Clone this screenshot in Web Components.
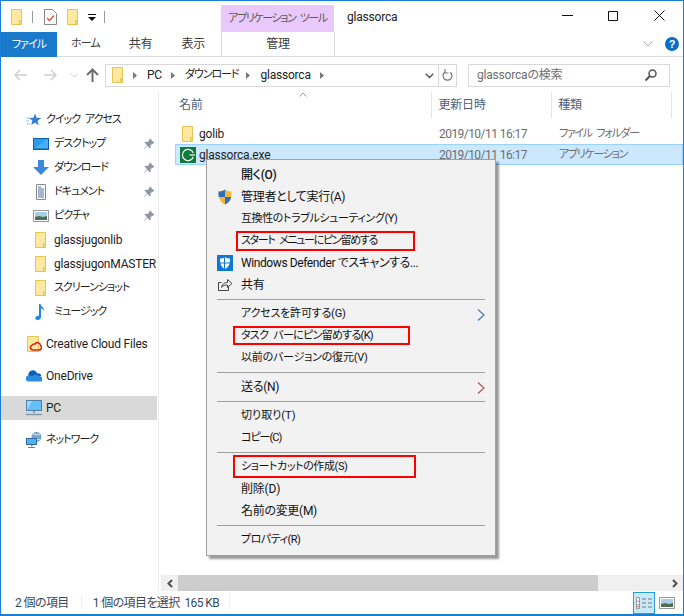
<!DOCTYPE html>
<html lang="ja">
<head>
<meta charset="utf-8">
<title>glassorca</title>
<style>
  html, body { margin: 0; padding: 0; height: 100%; background: #fff; }
  body {
    font: 12px/16px Roboto, "Noto Sans CJK JP", sans-serif;
    font-feature-settings: "palt";
    letter-spacing: -.2px;
    color: #1e1e1e;
  }
  nav-item.kana { font-size: 11px; letter-spacing: -1px; word-spacing: 3px; }
  menu-item.kana { font-size: 11px; letter-spacing: var(--ls, -.4px); word-spacing: 3px; }
  menu-item.tight { letter-spacing: -.3px; }
</style>
</head>
<body>

<explorer-window>
  <title-bar slot="top"></title-bar>
  <ribbon-tabs slot="top"></ribbon-tabs>
  <address-row slot="top"></address-row>

  <nav-pane slot="nav">
    <nav-item class="kana" level="top" icon="star">クイック アクセス</nav-item>
    <nav-item class="kana" icon="desktop" pinned>デスクトップ</nav-item>
    <nav-item class="kana" icon="download" pinned>ダウンロード</nav-item>
    <nav-item class="kana" icon="document" pinned>ドキュメント</nav-item>
    <nav-item class="kana" icon="picture" pinned>ピクチャ</nav-item>
    <nav-item icon="folder">glassjugonlib</nav-item>
    <nav-item icon="folder">glassjugonMASTER</nav-item>
    <nav-item class="kana" icon="folder">スクリーンショット</nav-item>
    <nav-item class="kana" icon="music">ミュージック</nav-item>
    <nav-item level="top" icon="creative" style="--gap-top:8px">Creative Cloud Files</nav-item>
    <nav-item level="top" icon="onedrive" style="--gap-top:8px">OneDrive</nav-item>
    <nav-item level="top" icon="pc" selected style="--gap-top:8px">PC</nav-item>
    <nav-item class="kana" level="top" icon="network" style="--gap-top:8px">ネットワーク</nav-item>
  </nav-pane>

  <file-list slot="files">
    <file-row icon="folder" date="2019/10/11 16:17" kind="ファイル フォルダー">golib</file-row>
    <file-row icon="app" date="2019/10/11 16:17" kind="アプリケーション" selected>glassorca.exe</file-row>
  </file-list>

  <status-bar slot="bottom"></status-bar>

  <context-menu slot="overlay">
    <menu-item class="tight" strong>開く(O)</menu-item>
    <menu-item class="tight" icon="uac">管理者として実行(A)</menu-item>
    <menu-item class="kana">互換性のトラブルシューティング(Y)</menu-item>
    <menu-item class="kana" style="--ls:-1.300px">スタート メニューにピン留めする</menu-item>
    <menu-item class="kana" style="font-size:12px;--ls:-.400px;word-spacing:0" icon="defender">Windows Defender でスキャンする...</menu-item>
    <menu-item icon="share">共有</menu-item>
    <menu-sep></menu-sep>
    <menu-item class="kana" style="--ls:-.2px" arrow="#4a7ab8">アクセスを許可する(G)</menu-item>
    <menu-item class="kana" style="--ls:-.7px">タスク バーにピン留めする(K)</menu-item>
    <menu-item class="kana" style="--ls:-.2px">以前のバージョンの復元(V)</menu-item>
    <menu-sep></menu-sep>
    <menu-item class="tight" arrow="#b0555a">送る(N)</menu-item>
    <menu-sep></menu-sep>
    <menu-item class="kana" style="--ls:0px">切り取り(T)</menu-item>
    <menu-item class="kana" style="--ls:-1px">コピー(C)</menu-item>
    <menu-sep></menu-sep>
    <menu-item class="kana">ショートカットの作成(S)</menu-item>
    <menu-item>削除(D)</menu-item>
    <menu-item class="tight">名前の変更(M)</menu-item>
    <menu-sep></menu-sep>
    <menu-item class="kana" style="--ls:-.5px">プロパティ(R)</menu-item>
  </context-menu>

  <red-mark slot="overlay" style="left:236px;top:231px;width:175px;height:16px"></red-mark>
  <red-mark slot="overlay" style="left:233px;top:326px;width:173px;height:15px"></red-mark>
  <red-mark slot="overlay" style="left:233px;top:455px;width:179px;height:19px"></red-mark>
</explorer-window>

<script>
// Icon drawings, all on a 16x16 grid unless noted.
const ICONS = {
  folder: `<svg viewBox="0 0 16 18" width="16" height="18"><path d="M2.500 1.500h10v15h-10z" fill="#ffe9a0" stroke="#e6c455"/><path d="M10.500 16.500v-4h2v4z" fill="#f7d774" stroke="#e6c455"/></svg>`,
  star: `<svg viewBox="0 0 16 16" width="16" height="16"><path d="M9 1.500l1.600 4.300 4.600.2-3.600 2.900 1.200 4.500L9 10.400l-3.800 2.500 1.200-4.500L2.800 6l4.600-.2z" fill="#2f7fd6"/><path d="M0 6h4M0 9h3M1 12h3" stroke="#8ec1ee" stroke-width="1"/></svg>`,
  desktop: `<svg viewBox="0 0 16 16" width="16" height="16"><rect x="0.500" y="2.500" width="15" height="11" fill="#2e9bf0" stroke="#0f5fb0"/><path d="M1 13l13-10h1v10z" fill="#46b1f7"/><rect x="0" y="12.500" width="16" height="1.500" fill="#0f5fb0"/></svg>`,
  download: `<svg viewBox="0 0 16 16" width="16" height="16"><path d="M5 0h6v7h5l-8 8-8-8h5z" fill="#3b87d9"/></svg>`,
  document: `<svg viewBox="0 0 16 16" width="16" height="16"><path d="M3.500.5h9v15h-9z" fill="#fff" stroke="#8a8a8a"/><path d="M5 3h3M5 5h6M5 7h6M5 9h6M5 11h6M5 13h6" stroke="#3f74a8"/></svg>`,
  picture: `<svg viewBox="0 0 16 16" width="16" height="16"><rect x="0.500" y="2.500" width="15" height="11" fill="#fff" stroke="#9a9a9a"/><rect x="2" y="4" width="12" height="8" fill="#a9cfe6"/><path d="M2 9l4-1 4 1 4-1v4H2z" fill="#4d6f50"/></svg>`,
  music: `<svg viewBox="0 0 16 16" width="16" height="16"><path d="M6 0h1.500c.3 2.500 4 3.500 4 7-.8-1.500-2-2.300-3.500-2.600V13c0 1.800-1.600 3-3.500 3S2 15 2.500 13.500 5 11.300 6 12z" fill="#1e88e5"/></svg>`,
  creative: `<svg viewBox="0 0 16 18" width="16" height="18"><path d="M1.500 1.500h11v15h-11z" fill="#ffe9a0" stroke="#e6c455"/><path d="M9 9a3 3 0 0 1 5.500 1.500A2.500 2.500 0 0 1 13 15H7a2.500 2.500 0 0 1-1-4.800A3 3 0 0 1 9 9z" fill="none" stroke="#d8271c" stroke-width="1.600"/></svg>`,
  onedrive: `<svg viewBox="0 0 16 12" width="16" height="12"><path d="M2.500 6a4.500 4.500 0 0 1 8.700-2.500A3.500 3.500 0 0 1 15.500 6L7 9z" fill="#0f5fb5"/><path d="M3 11.500A3 3 0 0 1 2.500 5.500l4 .5 3-1.500 6 2.500a2.300 2.300 0 0 1-1 4.500z" fill="#2a8ce0"/></svg>`,
  pc: `<svg viewBox="0 0 16 16" width="16" height="16"><rect x="0.500" y="0.500" width="15" height="10" fill="#64c0f8" stroke="#4f7ea5"/><path d="M1 10V1h5z" fill="#9adafc"/><path d="M7 11h2v2H7z" fill="#8aa4b8"/><path d="M0 14.500h16" stroke="#7d99ae" stroke-width="1.400"/></svg>`,
  network: `<svg viewBox="0 0 16 16" width="16" height="16"><circle cx="10.500" cy="5" r="5" fill="#7aa6c8"/><path d="M7 2c2 1 6 1 7 0M8 8c2-1 4-1 6 0" stroke="#dbe9f3" fill="none"/><rect x="0.500" y="6.500" width="10" height="6" fill="#4fb2f2" stroke="#2f6c99"/><path d="M5 13h1.500v1.500H5zM2 15h7v1H2z" fill="#5c87a6"/></svg>`,
  app: `<svg viewBox="0 0 16 16" width="16" height="16"><rect width="16" height="16" fill="#0f7a3c"/><path d="M13.300 6A5.600 5.600 0 1 0 13.300 10" fill="none" stroke="#fff" stroke-width="1.100"/><path d="M9.500 8H15" stroke="#fff" stroke-width="1.200"/></svg>`,
  uac: `<svg viewBox="0 0 16 16" width="16" height="16"><path d="M8 .5c2 1.500 4 2 6.500 2 0 6-1 10.500-6.500 13C2.500 13 1.500 8.500 1.500 2.500 4 2.500 6 2 8 .5z" fill="#f2b632"/><path d="M8 .5v7.500H1.700C1.500 6.500 1.500 4.500 1.500 2.500 4 2.500 6 2 8 .5z" fill="#2d6fc4"/><path d="M8 8h6.200c-.6 3.300-2.300 5.800-6.200 7.500z" fill="#2d6fc4"/></svg>`,
  defender: `<svg viewBox="0 0 16 16" width="16" height="16"><rect width="16" height="16" fill="#0f78d4"/><path d="M8 2c1.500 1 3 1.500 5 1.500 0 5-.8 8.500-5 10.500-4.200-2-5-5.500-5-10.500C5 3.500 6.500 3 8 2z" fill="#fff"/><path d="M7.500 2v12M3 8h10" stroke="#0f78d4"/></svg>`,
  share: `<svg viewBox="0 0 16 16" width="16" height="16" fill="none" stroke="#444"><path d="M11.500 9.500v4h-10v-8h3"/><path d="M4.500 10.500c.5-3.500 3-5 6-5v-3l4.500 4-4.500 4V8c-2.500 0-4.500.5-6 2.500z"/></svg>`,
  pin: `<svg viewBox="0 0 12 12" width="12" height="12"><path d="M7 .5l4.500 4.500-1.300.8-.7-.3-2 2 .2 2-1 1-2.300-2.700L1 11l-.2-.2L4 7 1.500 4.700l1-1 2 .2 2-2-.3-.7z" fill="#8d98a3"/></svg>`
}

/**
 * Draws one named icon from the ICONS table.
 */
customElements.define('app-icon', class extends HTMLElement {
  constructor () {
    super()
    this.attachShadow({ mode: 'open' }).innerHTML = `
      <style>:host { display: inline-flex; align-items: center; justify-content: center; flex: none; } svg { display: block; }</style>
      ${ICONS[this.getAttribute('name')] || ''}`
  }
})

// Outer window frame: blue border, stacked bars, nav pane beside the file list.
customElements.define('explorer-window', class extends HTMLElement {
  constructor () {
    super()
    this.attachShadow({ mode: 'open' }).innerHTML = `
      <style>
        :host {
          display: flex; flex-direction: column; position: relative;
          width: 684px; height: 616px; box-sizing: border-box;
          border: 1px solid #1a7fd4; border-bottom-width: 2px;
          background: #fff; overflow: hidden;
        }
        #main { flex: 1; display: flex; min-height: 0; }
        #overlay { position: absolute; left: -1px; top: -1px; width: 0; height: 0; }
      </style>
      <slot name="top"></slot>
      <div id="main">
        <slot name="nav"></slot>
        <slot name="files"></slot>
      </div>
      <slot name="bottom"></slot>
      <div id="overlay"><slot name="overlay"></slot></div>`
  }
})

customElements.define('title-bar', class extends HTMLElement {
  constructor () {
    super()
    this.attachShadow({ mode: 'open' }).innerHTML = `
      <style>
        :host { display: flex; height: 31px; align-items: center; position: relative; }
        #qat { display: flex; align-items: center; margin: 0 0 0 8px; width: 212px; }
        .sep { width: 1px; height: 12px; background: #9a9a9a; }
        #tool {
          align-self: flex-end; width: 113px; height: 27px; background: #e9c9fb;
          display: flex; align-items: center; justify-content: center; color: #5a5a5a; white-space: nowrap;
          font-size: 11px; letter-spacing: -1.400px; word-spacing: 3px;
        }
        #name { margin-left: 13px; flex: 1; color: #222; }
        #buttons { display: flex; margin-right: 1px; }
        .btn { width: 46px; height: 30px; display: flex; align-items: center; justify-content: center; margin-top: -2px; }
      </style>
      <div id="qat">
        <app-icon name="folder"></app-icon>
        <span class="sep" style="margin-left:7px"></span>
        <svg style="margin-left:11px" width="13" height="16" viewBox="0 0 13 16"><path d="M.5.500h8l4 4v11H.5z" fill="#fff" stroke="#888"/><path d="M3 9l2.500 2.500L10 6.500" fill="none" stroke="#e2512a" stroke-width="1.400"/></svg>
        <app-icon name="folder" style="margin-left:8px"></app-icon>
        <svg style="margin-left:7px;margin-top:2px" width="8" height="8" viewBox="0 0 8 8"><path d="M0 0h8v1H0zM0 3h8L4 7z" fill="#111"/></svg>
        <span class="sep" style="margin-left:8px"></span>
      </div>
      <div id="tool">アプリケーション ツール</div>
      <div id="name">glassorca</div>
      <div id="buttons">
        <div class="btn"><svg width="11" height="11"><path d="M0 5.500h11" stroke="#111"/></svg></div>
        <div class="btn"><svg width="10" height="10"><path d="M.5.500h9v9h-9z" fill="none" stroke="#111"/></svg></div>
        <div class="btn"><svg width="11" height="11"><path d="M.5.500l10 10M10.500.500l-10 10" stroke="#111" fill="none"/></svg></div>
      </div>`
  }
})

customElements.define('ribbon-tabs', class extends HTMLElement {
  constructor () {
    super()
    this.attachShadow({ mode: 'open' }).innerHTML = `
      <style>
        :host { display: flex; height: 25px; align-items: stretch; border-bottom: 1px solid #dadbdc; box-sizing: border-box; color: #3c3c3c; }
        .tab { display: flex; align-items: center; }
        .k { font-size: 11px; letter-spacing: -.9px; }
        #file { width: 56px; background: #1979ca; color: #fff; justify-content: center; margin-bottom: -1px; }
        #manage { position: absolute; left: 220px; width: 112px; height: 24px; justify-content: center; border: solid #dadbdc; border-width: 0 1px; }
        #right { margin-left: auto; display: flex; align-items: center; }
        #help {
          width: 14px; height: 14px; border-radius: 50%; background: #0b6fc4; color: #fff; margin: 0 4px 0 12px;
          font: 700 11px/14px "Liberation Sans", sans-serif; text-align: center;
        }
      </style>
      <div class="tab k" id="file">ファイル</div>
      <div class="tab k" style="margin-left:14px">ホーム</div>
      <div class="tab" style="margin-left:29px">共有</div>
      <div class="tab" style="margin-left:29px">表示</div>
      <div class="tab" id="manage">管理</div>
      <div id="right">
        <svg width="10" height="6" viewBox="0 0 10 6"><path d="M.5.500L5 5 9.500.500" fill="none" stroke="#a8a8a8"/></svg>
        <div id="help">?</div>
      </div>`
  }
})

customElements.define('address-row', class extends HTMLElement {
  constructor () {
    super()
    this.attachShadow({ mode: 'open' }).innerHTML = `
      <style>
        :host { display: flex; height: 34px; align-items: center; box-sizing: border-box; padding: 2px 0 0 13px; color: #222; }
        svg { display: block; flex: none; }
        #path {
          margin-left: 6px; width: 334px; height: 23px; box-sizing: border-box; border: 1px solid #d9d9d9;
          display: flex; align-items: center; padding-left: 4px; position: relative;
        }
        #refresh {
          width: 18px; height: 23px; box-sizing: border-box; border: solid #d9d9d9; border-width: 1px 1px 1px 0;
          display: flex; align-items: center; justify-content: center;
        }
        #search {
          margin-left: 11px; width: 202px; height: 23px; box-sizing: border-box; border: 1px solid #d9d9d9;
          display: flex; align-items: center; padding: 0 12px 0 8px; color: #6d6d6d; justify-content: space-between;
        }
        .crumb { margin-left: 9px; }
        .chev { margin-left: 9px; }
        #drop { position: absolute; right: 4px; top: 8px; }
      </style>
      <svg width="13" height="12" viewBox="0 0 13 12"><path d="M6 1L1 6l5 5M1 6h12" fill="none" stroke="#cfcfcf" stroke-width="1.500"/></svg>
      <svg style="margin-left:17px" width="13" height="12" viewBox="0 0 13 12"><path d="M7 1l5 5-5 5M12 6H0" fill="none" stroke="#cfcfcf" stroke-width="1.500"/></svg>
      <svg style="margin-left:13px" width="8" height="5" viewBox="0 0 8 5"><path d="M.5.500L4 4 7.500.500" fill="none" stroke="#d4d4d4"/></svg>
      <svg style="margin-left:8px" width="13" height="14" viewBox="0 0 13 14"><path d="M1 7l5.500-5.500L12 7M6.500 2v12" fill="none" stroke="#6d6d6d" stroke-width="2"/></svg>
      <div id="path">
        <app-icon name="folder"></app-icon>
        <svg class="chev" style="margin-left:7px" width="5" height="7"><path d="M0 0l4 3.500L0 7z" fill="#777"/></svg>
        <span class="crumb">PC</span>
        <svg class="chev" width="5" height="7"><path d="M0 0l4 3.500L0 7z" fill="#777"/></svg>
        <span class="crumb" style="font-size:11px;letter-spacing:-1.100px">ダウンロード</span>
        <svg class="chev" style="margin-left:8px" width="5" height="7"><path d="M0 0l4 3.500L0 7z" fill="#777"/></svg>
        <span class="crumb">glassorca</span>
        <svg class="chev" width="5" height="7"><path d="M0 0l4 3.500L0 7z" fill="#777"/></svg>
        <svg id="drop" width="9" height="6" viewBox="0 0 9 6"><path d="M.7.700L4.500 4.500 8.300.700" fill="none" stroke="#555" stroke-width="1.400"/></svg>
      </div>
      <div id="refresh">
        <svg width="11" height="12" viewBox="0 0 11 12"><path d="M8.300 3.200A4.500 4.500 0 1 1 2.700 3.200" fill="none" stroke="#777" stroke-width="1.200"/><path d="M6 0v4h3.500" fill="none" stroke="#777" stroke-width="1.200" transform="translate(-3 0)"/></svg>
      </div>
      <div id="search">
        <span>glassorcaの検索</span>
        <svg width="12" height="12" viewBox="0 0 12 12"><circle cx="7.500" cy="4.500" r="3.500" fill="none" stroke="#555" stroke-width="1.500"/><path d="M5 7l-4.500 4.500" stroke="#555" stroke-width="2"/></svg>
      </div>`
  }
})

customElements.define('nav-pane', class extends HTMLElement {
  constructor () {
    super()
    this.attachShadow({ mode: 'open' }).innerHTML = `
      <style>
        :host { display: block; width: 158px; flex: none; box-sizing: border-box; padding-top: 17px; border-right: 2px solid transparent; position: relative; }
        #line { position: absolute; right: -2px; top: 0; bottom: 0; width: 1px; background: #efefef; }
        #inner { width: 156px; }
      </style>
      <div id="inner"><slot></slot></div><div id="line"></div>`
  }
})

customElements.define('nav-item', class extends HTMLElement {
  constructor () {
    super()
    const top = this.getAttribute('level') === 'top'
    const pin = this.hasAttribute('pinned') ? '<app-icon id="pin" name="pin"></app-icon>' : ''
    this.attachShadow({ mode: 'open' }).innerHTML = `
      <style>
        :host { display: flex; align-items: center; height: 24px; margin-top: var(--gap-top, 0); position: relative; white-space: nowrap; }
        :host([selected]) { background: #d9d9d9; }
        app-icon { margin-left: ${top ? 25 : 32}px; width: 16px; }
        #text { margin-left: ${top ? 4 : 5}px; }
        #pin { position: absolute; left: 142px; margin: 0; width: 12px; }
      </style>
      <app-icon name="${this.getAttribute('icon')}"></app-icon>
      <span id="text"><slot></slot></span>${pin}`
  }
})

customElements.define('file-list', class extends HTMLElement {
  constructor () {
    super()
    this.attachShadow({ mode: 'open' }).innerHTML = `
      <style>
        :host { flex: 1; min-width: 0; display: flex; flex-direction: column; position: relative; }
        #head { display: flex; height: 26px; margin: 1px 0 5px 0; padding-left: 20px; color: #4c607a; position: relative; align-items: center; }
        .col { height: 100%; display: flex; align-items: center; box-sizing: border-box; }
        .col + .col { border-left: 1px solid #e5e5e5; padding-left: 6px; }
        #sort { position: absolute; left: 140px; top: 0; }
        #rows { flex: 1; padding-left: 16px; }
        #bar { height: 16px; display: flex; background: #f0f0f0; margin-left: 2px; }
        .end { width: 17px; display: flex; align-items: center; justify-content: center; flex: none; }
        #thumb { width: 420px; background: #cdcdcd; }
        #gap { flex: 1; }
      </style>
      <div id="head">
        <div class="col" style="width:253px">名前</div>
        <div class="col" style="width:120px">更新日時</div>
        <div class="col" style="width:120px">種類</div>
        <div class="col" style="width:12px"></div>
        <svg id="sort" width="8" height="5" viewBox="0 0 8 5"><path d="M.5 4.500L4 1l3.500 3.500" fill="none" stroke="#9a9a9a"/></svg>
      </div>
      <div id="rows"><slot></slot></div>
      <div id="bar">
        <div class="end"><svg width="6" height="9" viewBox="0 0 6 9"><path d="M5 1L1.500 4.500 5 8" fill="none" stroke="#505050" stroke-width="2"/></svg></div>
        <div id="thumb"></div>
        <div id="gap"></div>
        <div class="end"><svg width="6" height="9" viewBox="0 0 6 9"><path d="M1 1l3.500 3.500L1 8" fill="none" stroke="#505050" stroke-width="2"/></svg></div>
      </div>`
  }
})

customElements.define('file-row', class extends HTMLElement {
  constructor () {
    super()
    this.attachShadow({ mode: 'open' }).innerHTML = `
      <style>
        :host { display: flex; align-items: center; height: 21px; box-sizing: border-box; border: 1px solid transparent; white-space: nowrap; }
        :host([selected]) { background: #cce8ff; border-color: #99d1ff; }
        app-icon { margin-left: 4px; width: 16px; }
        #name { width: 240px; margin-left: 3px; }
        #date { width: 120px; color: #6d6d6d; letter-spacing: -.55px; }
        #kind { color: #6d6d6d; font-size: 11px; letter-spacing: -1.300px; word-spacing: 3px; }
      </style>
      <app-icon name="${this.getAttribute('icon')}"></app-icon>
      <span id="name"><slot></slot></span>
      <span id="date">${this.getAttribute('date')}</span>
      <span id="kind">${this.getAttribute('kind')}</span>`
  }
})

customElements.define('status-bar', class extends HTMLElement {
  constructor () {
    super()
    this.attachShadow({ mode: 'open' }).innerHTML = `
      <style>
        :host { display: flex; height: 23px; align-items: center; color: #3a4a5e; position: relative; white-space: nowrap; letter-spacing: -.6px; }
        .sep { width: 1px; height: 15px; background: #f0f0f0; }
        #views { margin-left: auto; margin-right: 8px; display: flex; align-items: center; }
        #details { width: 22px; height: 22px; box-sizing: border-box; border: 1px solid #26a0da; background: #cbe8f6; display: flex; align-items: center; justify-content: center; }
      </style>
      <span style="margin-left:14px">2 個の項目</span>
      <span class="sep" style="margin-left:12px"></span>
      <span style="margin-left:11px">1 個の項目を選択&nbsp;&nbsp;165 KB</span>
      <span class="sep" style="margin-left:10px"></span>
      <div id="views">
        <div id="details">
          <svg width="16" height="12" viewBox="0 0 16 12"><path d="M.5.500h3v11h-3zM.5 4.200h3M.5 7.800h3" fill="#fff" stroke="#999"/><path d="M1.500 9h1v1.500h-1z" fill="#d33"/><path d="M6 2h4M12 2h4M6 6h4M12 6h4M6 10h4M12 10h4" stroke="#6a7a88"/></svg>
        </div>
        <app-icon name="picture" style="margin-left:4px"></app-icon>
      </div>`
  }
})

customElements.define('context-menu', class extends HTMLElement {
  constructor () {
    super()
    this.attachShadow({ mode: 'open' }).innerHTML = `
      <style>
        :host {
          position: absolute; left: 206px; top: 159px; width: 290px; box-sizing: border-box;
          background: #f2f2f2; border: 1px solid #a0a0a0; padding: 4px 0 4px; color: #111;
          box-shadow: 3px 3px 2px rgba(0, 0, 0, .4); display: block; white-space: nowrap;
        }
      </style>
      <slot></slot>`
  }
})

customElements.define('menu-item', class extends HTMLElement {
  constructor () {
    super()
    const icon = this.getAttribute('icon')
    const arrow = this.getAttribute('arrow')
    this.attachShadow({ mode: 'open' }).innerHTML = `
      <style>
        :host { display: flex; align-items: center; height: 22px; padding-left: 10px; position: relative; }
        :host([strong]) { font-weight: 500; }
        #icon { width: 16px; height: 16px; margin-right: 8px; flex: none; }
        #arrow { position: absolute; right: 10px; top: 6px; }
      </style>
      <div id="icon">${icon ? `<app-icon name="${icon}"></app-icon>` : ''}</div>
      <span><slot></slot></span>
      ${arrow ? `<svg id="arrow" width="8" height="12" viewBox="0 0 8 12"><path d="M1 .5L7 6l-6 5.500" fill="none" stroke="${arrow}" stroke-width="1.200"/></svg>` : ''}`
  }
})

customElements.define('menu-sep', class extends HTMLElement {
  constructor () {
    super()
    this.attachShadow({ mode: 'open' }).innerHTML = `
      <style>:host { display: block; height: 1px; background: #a0a0a0; margin: 3px 10px; }</style>`
  }
})

// Red rectangles that mark menu entries; they lie over the menu.
customElements.define('red-mark', class extends HTMLElement {
  constructor () {
    super()
    this.attachShadow({ mode: 'open' }).innerHTML = `
      <style>:host { display: block; position: absolute; border: 2px solid #f00; }</style>`
  }
})
</script>
</body>
</html>
